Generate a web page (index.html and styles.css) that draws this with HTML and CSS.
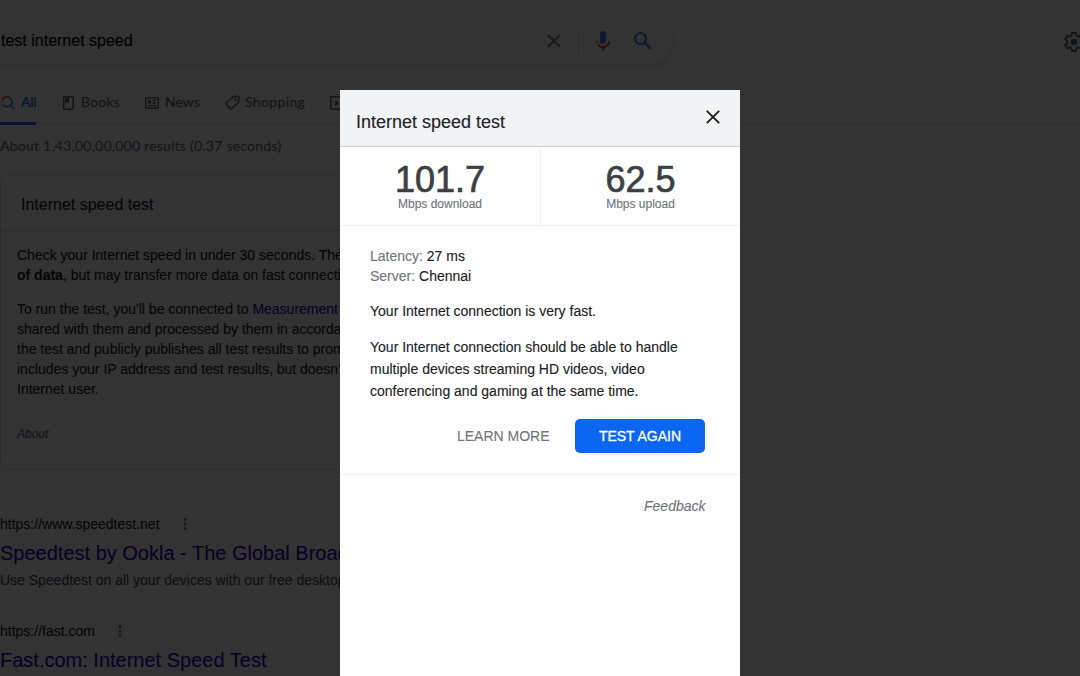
FILE: index.html
```
<!DOCTYPE html>
<html lang="en">
<head>
<meta charset="utf-8">
<title>test internet speed</title>
<link rel="stylesheet" href="styles.css">
</head>
<body>
<div class="page">
  <header class="topbar">
    <div class="searchbox">
      <span class="query">test internet speed</span>
      <svg class="clear" width="14" height="14" viewBox="0 0 14 14"><path d="M.8.8l12.4 12.4M13.2.8L.8 13.2" fill="none" stroke="#70757a" stroke-width="1.9"/></svg>
      <span class="divider"></span>
      <svg class="mic" width="16" height="22" viewBox="0 0 16 22"><rect x="5" y="1" width="6" height="13" rx="3" fill="#4274e8"/><path d="M7 17h2v4H7z" fill="#34a853"/><path d="M1.900 11c0 1.800.6 3.300 1.800 4.400" fill="none" stroke="#fbbc04" stroke-width="2"/><path d="M3.600 15.200A6 6 0 0 0 8 17c3.500 0 6.100-2.500 6.100-6" fill="none" stroke="#ea3325" stroke-width="2"/></svg>
      <svg class="glass" width="18" height="18" viewBox="0 0 18 18"><circle cx="6.600" cy="6.600" r="5.500" fill="none" stroke="#4274e8" stroke-width="2"/><path d="M10.700 10.700l6 6" stroke="#4274e8" stroke-width="2.200"/></svg>
    </div>
    <svg class="gear" width="20" height="20" viewBox="0 0 20 20"><path d="M8 1h4l.5 2.700 1.700 1 2.600-1 2 3.500-2.100 1.700v2.200l2.100 1.700-2 3.500-2.600-1-1.700 1L12 19H8l-.5-2.700-1.700-1-2.600 1-2-3.500 2.100-1.700V8.900L1.200 7.200l2-3.500 2.600 1 1.700-1z" fill="none" stroke="#5f6368" stroke-width="1.900" stroke-linejoin="round"/><circle cx="10" cy="10" r="3.300" fill="#5f6368"/></svg>
  </header>

  <nav class="tabs">
    <a class="tab active"><svg width="14" height="14" viewBox="0 0 14 14" fill="none" stroke-width="1.600"><path d="M1.200 6.900A4.700 4.700 0 0 1 2 2.700" stroke="#fbbc04"/><path d="M1.500 3.500A4.900 4.900 0 0 1 6 .9" stroke="#ea4335"/><path d="M6 .9a4.900 4.900 0 0 1 4.900 4.900" stroke="#34a853"/><path d="M10.900 5.800A4.900 4.900 0 0 1 1.600 8M9.400 9.300l4 4" stroke="#4285f4"/></svg><span>All</span></a>
    <a class="tab books"><svg width="12" height="14" viewBox="0 0 12 14"><rect x="1.700" y=".8" width="9.500" height="12.400" rx="1" fill="none" stroke="#5f6368" stroke-width="1.500"/><path d="M3 1h4v6.500L5 6 3 7.500z" fill="#5f6368"/></svg><span>Books</span></a>
    <a class="tab news"><svg width="14" height="12" viewBox="0 0 14 12" fill="none" stroke="#5f6368"><rect x=".7" y=".7" width="12.600" height="10.600" rx="1" stroke-width="1.400"/><path d="M7.500 3.500H11M7.500 6H11M3 8.700h8" stroke-width="1.300"/><path d="M3 3h3v3.500H3z" fill="#5f6368" stroke="none"/></svg><span>News</span></a>
    <a class="tab shopping"><svg width="15" height="15" viewBox="0 0 15 15"><path d="M8.300 1.500l4.800-.3q1 0 1 1L13.700 7 6.700 13.500q-.7.600-1.400 0L1.300 9.400q-.6-.7 0-1.400z" fill="none" stroke="#5f6368" stroke-width="1.500" stroke-linejoin="round"/><circle cx="10.500" cy="4.500" r="1.200" fill="#5f6368"/></svg><span>Shopping</span></a>
    <a class="tab videos"><svg width="14" height="14" viewBox="0 0 14 14"><rect x=".8" y=".8" width="12.400" height="12.400" rx="1" fill="none" stroke="#5f6368" stroke-width="1.500"/><path d="M5.300 4l4 3-4 3z" fill="#5f6368"/></svg></a>
  </nav>

  <div class="stats">About 1,43,00,00,000 results (0.37 seconds)</div>

  <section class="card">
    <h2>Internet speed test</h2>
    <div class="card-body">
      <p>Check your Internet speed in under 30 seconds. The<br><b>of data</b>, but may transfer more data on fast connecti</p>
      <p>To run the test, you'll be connected to <a>Measurement</a><br>shared with them and processed by them in accorda<br>the test and publicly publishes all test results to prom<br>includes your IP address and test results, but doesn’t<br>Internet user.</p>
      <div class="about">About</div>
    </div>
  </section>

  <article class="result">
    <div class="url"><span class="w1">https://www.speedtest.net</span><svg width="4" height="12" viewBox="0 0 4 12" fill="#70757a"><circle cx="2" cy="1.600" r="1.500"/><circle cx="2" cy="6" r="1.500"/><circle cx="2" cy="10.400" r="1.500"/></svg></div>
    <h3>Speedtest by Ookla - The Global Broadband</h3>
    <p>Use Speedtest on all your devices with our free desktop</p>
  </article>
  <article class="result">
    <div class="url"><span class="w2">https://fast.com</span><svg width="4" height="12" viewBox="0 0 4 12" fill="#70757a"><circle cx="2" cy="1.600" r="1.500"/><circle cx="2" cy="6" r="1.500"/><circle cx="2" cy="10.400" r="1.500"/></svg></div>
    <h3>Fast.com: Internet Speed Test</h3>
  </article>
</div>

<div class="overlay">
  <div class="dialog">
    <header class="dialog-head">
      <span>Internet speed test</span>
      <svg width="14" height="14" viewBox="0 0 14 14"><path d="M.8.8l12.400 12.400M13.200.8L.8 13.200" fill="none" stroke="#202124" stroke-width="1.900"/></svg>
    </header>
    <div class="speeds">
      <div class="speed"><strong>101.7</strong><small>Mbps download</small></div>
      <div class="speed"><strong>62.5</strong><small>Mbps upload</small></div>
    </div>
    <div class="details">
      <div class="meta"><span>Latency:</span> 27 ms</div>
      <div class="meta"><span>Server:</span> Chennai</div>
      <p class="verdict">Your Internet connection is very fast.</p>
      <p class="explain">Your Internet connection should be able to handle<br>multiple devices streaming HD videos, video<br>conferencing and gaming at the same time.</p>
      <div class="actions"><a>LEARN MORE</a><button>TEST AGAIN</button></div>
    </div>
    <div class="feedback">Feedback</div>
  </div>
</div>
</body>
</html>
```
FILE: styles.css
```
* { box-sizing: border-box; }
body {
  margin: 0;
  height: 676px;
  overflow: hidden;
  background: #fff;
  color: #202124;
  font: 14px/20px "Liberation Sans", Arial, sans-serif;
  -webkit-text-stroke: .12px currentColor;
}
h2, h3, p { margin: 0; font-weight: 400; }
svg { display: block; flex: none; }
.page { height: 676px; overflow: hidden; white-space: nowrap; }

.topbar { display: flex; height: 85px; padding-top: 17px; }
.searchbox {
  display: flex;
  flex: none;
  align-items: center;
  width: 673px;
  height: 47px;
  border-radius: 0 24px 24px 0;
  box-shadow: 0 2px 5px 1px rgba(64, 60, 67, .16);
}
.query { width: 547px; padding-left: 1px; font-size: 16px; color: #000; }
.divider { width: 1px; height: 28px; margin: 0 16px 0 17px; background: #dadce0; }
.mic { margin-right: 23px; }
.gear { margin: 15px 0 0 391px; }

.tabs {
  display: flex;
  height: 40px;
  border-bottom: 1px solid #ebebeb;
  color: #5f6368;
  font-family: Lato, sans-serif;
  letter-spacing: .2px;
}
.tab { display: flex; align-items: center; height: 40px; padding-bottom: 7px; }
.tab svg { margin-top: 2px; }
.active { width: 36px; gap: 6px; padding-left: 1px; border-bottom: 3px solid #0b66f2; padding-bottom: 4px; color: #0b66f2; letter-spacing: -.2px; }
.books { width: 83px; margin-left: 26px; gap: 7px; }
.news { width: 80px; gap: 6px; letter-spacing: 0; }
.shopping { width: 105px; gap: 5px; letter-spacing: .35px; }
.stats { height: 49px; padding-top: 11px; color: #70757a; font-family: Lato, sans-serif; letter-spacing: .235px; }

.card { width: 652px; height: 296px; border: 1px solid #dadce0; border-radius: 8px; }
.card h2 { height: 56px; padding: 20px 20px 0; border-bottom: 1px solid #dadce0; font-size: 16px; }
.card-body { padding: 14px 16px; }
.card-body p { margin-bottom: 14px; }
.card-body a { color: #3000c0; }
.about { padding-top: 11px; font-size: 12px; font-style: italic; color: #70757a; }

.result { height: 107px; }
.card + .result { margin-top: 44px; }
.url { display: flex; align-items: center; height: 20px; }
.w1 { width: 183px; }
.w2 { width: 118px; }
.result h3 { height: 27px; margin-top: 6px; font-size: 20px; line-height: 26px; color: #3000c0; }
.result p { padding-top: 3px; color: #4d5156; }

.overlay { position: fixed; inset: 0; background: rgba(0, 0, 0, .8); }
.dialog { width: 400px; height: 586px; margin: 90px auto 0; background: #fff; }
.dialog-head {
  display: flex;
  justify-content: space-between;
  height: 57px;
  padding: 20px 20px 0 16px;
  border-bottom: 1px solid #ccc;
  background: #f1f3f4;
  font-size: 18px;
  line-height: 24px;
}
.speeds { display: flex; height: 79px; border-bottom: 1px solid #f1f1f1; }
.speed { display: flex; flex-direction: column; align-items: center; width: 200px; padding-top: 15px; }
.speed + .speed { border-left: 1px solid #f1f1f1; }
.speed strong { font-size: 36px; line-height: 36px; font-weight: 400; color: #3c4043; -webkit-text-stroke-width: .7px; }
.speed small { font-size: 12px; line-height: 12px; color: #70757a; }
.details { height: 249px; padding: 20px 35px 0 30px; border-bottom: 1px solid #f1f1f1; white-space: nowrap; }
.meta span { color: #70757a; }
.verdict { margin-top: 15px; }
.explain { margin-top: 15px; line-height: 22px; }
.actions { display: flex; justify-content: flex-end; align-items: center; gap: 25.5px; margin-top: 17px; color: #70757a; }
.actions button {
  width: 130px;
  height: 34px;
  padding: 0;
  border: 0;
  border-radius: 5px;
  background: #0b66f2;
  color: #fff;
  font: 14px "Liberation Sans", Arial, sans-serif;
  -webkit-text-stroke: .3px #fff;
}
.feedback { padding: 21px 34.5px 0; text-align: right; font-style: italic; color: #70757a; }
```
